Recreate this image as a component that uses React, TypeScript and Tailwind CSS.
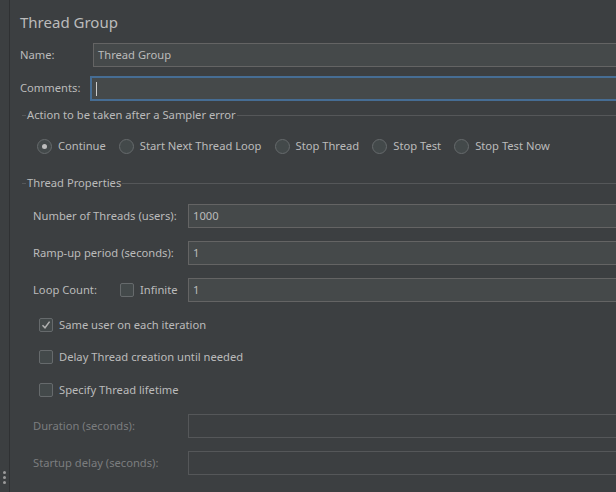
import React from "react";

const font = { fontFamily: '"Noto Sans", "Open Sans", sans-serif' };

function Radio({ checked, label }: { checked?: boolean; label: string }) {
  return (
    <div className="flex items-center">
      <div className="w-[15px] h-[15px] rounded-full border border-[#666a6c] bg-[#43494a] flex items-center justify-center">
        {checked && <div className="w-[5px] h-[5px] rounded-full bg-[#bdbdbd]" />}
      </div>
      <span className="ml-[6px] text-[11.2px] text-[#bbbbbb] leading-[16px]">{label}</span>
    </div>
  );
}

function Check({ checked }: { checked?: boolean }) {
  return (
    <div className="w-[14px] h-[14px] rounded-[2px] border border-[#666a6c] bg-[#43494a] flex items-center justify-center shrink-0">
      {checked && (
        <svg width="10" height="10" viewBox="0 0 10 10">
          <path d="M1.5 5.2 L4 7.8 L8.6 1.6" fill="none" stroke="#b0b0b0" strokeWidth="1.5" />
        </svg>
      )}
    </div>
  );
}

function CheckRow({ checked, label, mt }: { checked?: boolean; label: string; mt: string }) {
  return (
    <div className={`flex items-center ml-[19px] h-[14px] ${mt}`}>
      <Check checked={checked} />
      <span className="ml-[6px] text-[11.2px] text-[#bbbbbb] leading-[16px]">{label}</span>
    </div>
  );
}

function Titled({ label, mt }: { label: string; mt: string }) {
  return (
    <div className={`flex items-center ml-[2px] h-[16px] ${mt}`}>
      <div className="w-[4px] h-px bg-[#555759]" />
      <span className="px-[1px] text-[11.2px] text-[#bbbbbb] leading-[16px]">{label}</span>
      <div className="flex-1 h-px bg-[#555759]" />
    </div>
  );
}

function Field({ label, value, disabled, mt }: { label: string; value?: string; disabled?: boolean; mt: string }) {
  return (
    <div className={`flex items-center h-[24px] ${mt}`}>
      <div className={`ml-[13px] w-[155px] text-[11.2px] leading-[16px] ${disabled ? "text-[#7b7d7f]" : "text-[#bbbbbb]"}`}>{label}</div>
      <div
        className={`flex-1 -mr-4 h-[24px] border flex items-center pl-[4px] text-[11.2px] ${
          disabled ? "border-[#555759] bg-[#3c3f41]" : "border-[#646464] bg-[#45494a] text-[#bbbbbb]"
        }`}
      >
        {value}
      </div>
    </div>
  );
}

export default function App() {
  return (
    <div className="w-[616px] h-[492px] bg-[#3c3f41] flex overflow-hidden" style={font}>
      <div className="w-[10px] h-full border-r border-[#2f3133] relative shrink-0">
        <div className="absolute left-[3px] top-[471px] flex flex-col gap-[2px]">
          <div className="w-[3px] h-[3px] rounded-full bg-[#9a9a9a]" />
          <div className="w-[3px] h-[3px] rounded-full bg-[#9a9a9a]" />
          <div className="w-[3px] h-[3px] rounded-full bg-[#9a9a9a]" />
        </div>
      </div>
      <div className="flex-1 flex flex-col pl-[10px] min-w-0">
        <div className="mt-[11px] h-[22px] text-[15px] leading-[22px] text-[#bbbbbb]">Thread Group</div>
        <div className="flex items-center h-[24px] mt-[10px]">
          <div className="w-[73px] text-[11.2px] text-[#bbbbbb]">Name:</div>
          <div className="flex-1 -mr-4 h-[24px] border border-[#646464] bg-[#45494a] flex items-center pl-[4px] text-[11.2px] text-[#bbbbbb]">
            Thread Group
          </div>
        </div>
        <div className="flex items-center h-[25px] mt-[9px]">
          <div className="w-[70px] text-[11.2px] text-[#bbbbbb]">Comments:</div>
          <div className="flex-1 -mr-4 h-[25px] border-2 border-[#466d94] bg-[#45494a] flex items-center pl-[4px]">
            <div className="w-px h-[14px] bg-[#cccccc]" />
          </div>
        </div>
        <Titled label="Action to be taken after a Sampler error" mt="mt-[6px]" />
        <div className="flex items-center ml-[17px] mt-[15px] gap-[13px] h-[16px]">
          <Radio checked label="Continue" />
          <Radio label="Start Next Thread Loop" />
          <Radio label="Stop Thread" />
          <Radio label="Stop Test" />
          <Radio label="Stop Test Now" />
        </div>
        <Titled label="Thread Properties" mt="mt-[21px]" />
        <Field label="Number of Threads (users):" value="1000" mt="mt-[13px]" />
        <Field label="Ramp-up period (seconds):" value="1" mt="mt-[13px]" />
        <div className="flex items-center h-[24px] mt-[13px]">
          <div className="ml-[13px] w-[87px] text-[11.2px] text-[#bbbbbb]">Loop Count:</div>
          <Check />
          <div className="ml-[6px] w-[48px] text-[11.2px] text-[#bbbbbb]">Infinite</div>
          <div className="flex-1 -mr-4 h-[24px] border border-[#646464] bg-[#45494a] flex items-center pl-[4px] text-[11.2px] text-[#bbbbbb]">
            1
          </div>
        </div>
        <CheckRow checked label="Same user on each iteration" mt="mt-[16px]" />
        <CheckRow label="Delay Thread creation until needed" mt="mt-[18px]" />
        <CheckRow label="Specify Thread lifetime" mt="mt-[19px]" />
        <Field label="Duration (seconds):" disabled mt="mt-[17px]" />
        <Field label="Startup delay (seconds):" disabled mt="mt-[13px]" />
      </div>
    </div>
  );
}
